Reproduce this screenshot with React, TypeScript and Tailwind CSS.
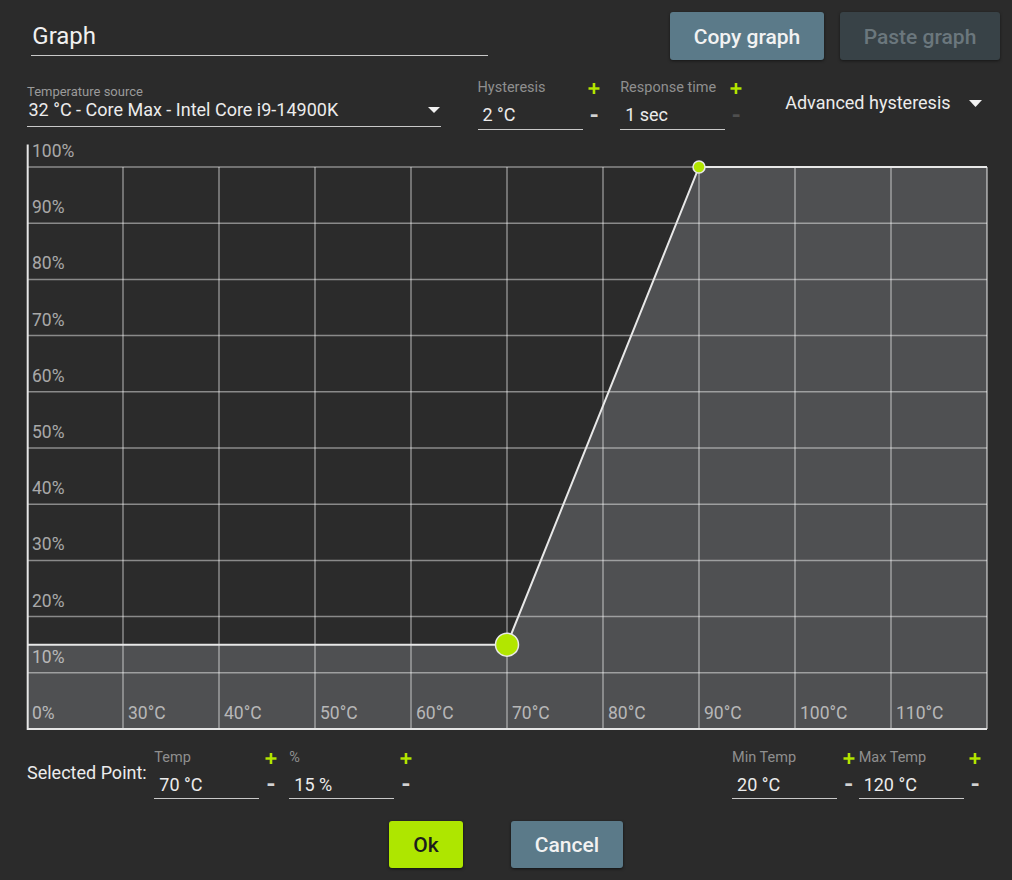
import React from "react";

const LIME = "#b2e600";

function Plus() {
  return (
    <svg width="12" height="11" viewBox="0 0 12 11">
      <path d="M6 0v11M0.5 5.5h11" stroke={LIME} strokeWidth="2.6" />
    </svg>
  );
}

function Caret({ w = 12, h = 6 }: { w?: number; h?: number }) {
  return (
    <svg width={w} height={h} viewBox={`0 0 ${w} ${h}`}>
      <path d={`M0 0H${w}L${w / 2} ${h}Z`} fill="#f2f2f2" />
    </svg>
  );
}

function Field({ label, value }: { label: string; value: string }) {
  return (
    <div className="w-[105px] shrink-0">
      <div className="h-[15px] text-[14.5px] leading-[15px] text-[#8f8f8f] whitespace-nowrap">{label}</div>
      <div className="mt-[10.2px] h-[24.8px] pl-[5px] text-[18px] leading-[20px] text-[#ececec] border-b-[1.5px] border-[#c9c9c9] whitespace-nowrap">
        {value}
      </div>
    </div>
  );
}

function Steps({ dim = false, className = "" }: { dim?: boolean; className?: string }) {
  return (
    <div className={`w-[12px] shrink-0 flex flex-col items-center ${className}`}>
      <div className="mt-[3.3px] h-[11px]">
        <Plus />
      </div>
      <div
        className={`mt-[8.6px] h-[24px] text-[24px] leading-[24px] font-bold ${dim ? "text-[#4f4f4f]" : "text-[#d2d2d2]"}`}
      >
        -
      </div>
    </div>
  );
}

function Chart() {
  const left = 27;
  const right = 987;
  const top = 167;
  const bottom = 729;
  const cw = 96;
  const rh = (bottom - top) / 10;
  const xs = Array.from({ length: 9 }, (_, i) => left + cw * (i + 1));
  const ys = Array.from({ length: 10 }, (_, i) => top + rh * i);
  const yLabels = ["100%", "90%", "80%", "70%", "60%", "50%", "40%", "30%", "20%", "10%", "0%"];
  const xLabels = ["30°C", "40°C", "50°C", "60°C", "70°C", "80°C", "90°C", "100°C", "110°C"];
  const p1 = { x: 507, y: bottom - 0.15 * (bottom - top) };
  const p2 = { x: 699, y: top };

  return (
    <svg width="1012" height="595" viewBox="0 140 1012 595" className="block shrink-0">
      {/* area under the curve */}
      <polygon
        points={`${left},${p1.y} ${p1.x},${p1.y} ${p2.x},${p2.y} ${right},${top} ${right},${bottom} ${left},${bottom}`}
        fill="#4f5052"
      />
      {/* grid */}
      {ys.map((y) => (
        <line key={`h${y}`} x1={left} x2={right} y1={y} y2={y} stroke="#ffffff" strokeOpacity="0.45" strokeWidth="1.5" />
      ))}
      {xs.map((x) => (
        <line key={`v${x}`} x1={x} x2={x} y1={top} y2={bottom} stroke="#ffffff" strokeOpacity="0.45" strokeWidth="1.5" />
      ))}
      <line x1={right} x2={right} y1={top} y2={bottom} stroke="#ffffff" strokeOpacity="0.6" strokeWidth="1.5" />

      {/* labels */}
      <g fontFamily="Roboto, sans-serif" fontSize="17.5" fill="#ffffff" fillOpacity="0.6">
        {yLabels.map((t, i) => (
          <text key={t} x={32} y={top + rh * i - 10}>
            {t}
          </text>
        ))}
        {xLabels.map((t, i) => (
          <text key={t} x={xs[i] + 5} y={bottom - 10}>
            {t}
          </text>
        ))}
      </g>

      {/* axes */}
      <line x1={left} x2={right} y1={bottom} y2={bottom} stroke="#e6e6e6" strokeWidth="2" />
      <line x1={27.7} x2={27.7} y1={144.5} y2={bottom + 1} stroke="#e6e6e6" strokeWidth="2" />

      {/* curve */}
      <polyline
        points={`${left},${p1.y} ${p1.x},${p1.y} ${p2.x},${p2.y} ${right},${top}`}
        fill="none"
        stroke="#e8e8e8"
        strokeWidth="2"
      />
      <circle cx={p1.x} cy={p1.y} r="11.5" fill={LIME} stroke="#e8e8e8" strokeWidth="1.5" />
      <circle cx={p2.x} cy={p2.y} r="6" fill={LIME} stroke="#e8e8e8" strokeWidth="1.5" />
    </svg>
  );
}

export default function App() {
  return (
    <div className="w-[1012px] h-[880px] bg-[#2b2b2b] overflow-hidden flex flex-col font-['Roboto',sans-serif] text-[#ececec]">
      {/* Header */}
      <div className="flex h-[80px] pt-[12px] shrink-0">
        <div className="ml-[30.7px] mt-[9.8px] w-[457.5px] h-[34.25px] pl-[1.6px] text-[24px] leading-[28px] text-[#f0f0f0] border-b-[1.5px] border-[#c9c9c9]">
          Graph
        </div>
        <div className="ml-auto mr-[12px] flex gap-[16px]">
          <button className="w-[154px] h-[47.5px] pt-[3px] rounded-[3px] bg-[#5b7a89] text-[21px] font-medium text-[#f2f2f2] shadow-[0_1px_3px_rgba(0,0,0,0.5)]">
            Copy graph
          </button>
          <button className="w-[160px] h-[47.5px] pt-[3px] rounded-[3px] bg-[#384247] text-[21px] font-medium text-[#6b777d] shadow-[0_1px_3px_rgba(0,0,0,0.5)]">
            Paste graph
          </button>
        </div>
      </div>

      {/* Source / hysteresis row */}
      <div className="flex items-start h-[60px] shrink-0">
        <div className="ml-[27px] w-[413.5px] shrink-0">
          <div className="mt-[3.75px] h-[15px] text-[13px] leading-[15px] text-[#9a9a9a]">Temperature source</div>
          <div className="mt-[0.8px] h-[27.3px] pl-[1.5px] pr-[1px] flex items-start justify-between border-b-[1.5px] border-[#c9c9c9]">
            <span className="text-[18px] leading-[20px] text-[#ececec] whitespace-nowrap">
              32 °C - Core Max - Intel Core i9-14900K
            </span>
            <span className="mt-[7px]">
              <Caret />
            </span>
          </div>
        </div>
        <div className="ml-[37px] flex items-start">
          <Field label="Hysteresis" value="2 °C" />
          <Steps className="ml-[5.7px]" />
          <div className="ml-[20px]">
            <Field label="Response time" value="1 sec" />
          </div>
          <Steps dim className="ml-[5px]" />
        </div>
        <div className="ml-[43px] mt-[13.2px] flex items-center gap-[18px]">
          <span className="text-[18px] leading-[20px] text-[#ececec] whitespace-nowrap">Advanced hysteresis</span>
          <Caret w={13} h={7} />
        </div>
      </div>

      {/* Graph */}
      <Chart />

      {/* Selected point / range row */}
      <div className="flex items-start h-[86px] pt-[14.5px] shrink-0">
        <div className="ml-[27px] w-[127.3px] shrink-0 mt-[13.7px] text-[18px] leading-[20px] text-[#ececec] whitespace-nowrap">
          Selected Point:
        </div>
        <Field label="Temp" value="70 °C" />
        <Steps className="ml-[5.7px]" />
        <div className="ml-[12.3px]">
          <Field label="%" value="15 %" />
        </div>
        <Steps className="ml-[5.7px]" />
        <div className="ml-auto flex items-start mr-[30.7px]">
          <Field label="Min Temp" value="20 °C" />
          <Steps className="ml-[5.6px]" />
          <div className="ml-[4px]">
            <Field label="Max Temp" value="120 °C" />
          </div>
          <Steps className="ml-[5.7px]" />
        </div>
      </div>

      {/* Dialog buttons */}
      <div className="flex justify-center gap-[48px] shrink-0">
        <button className="w-[74px] h-[47px] pt-[3px] rounded-[3px] bg-[#aee600] text-[21px] font-medium text-[#1c1c1c] shadow-[0_1px_3px_rgba(0,0,0,0.6)]">
          Ok
        </button>
        <button className="w-[112px] h-[47px] pt-[3px] rounded-[3px] bg-[#5b7a89] text-[21px] font-medium text-[#f2f2f2] shadow-[0_1px_3px_rgba(0,0,0,0.6)]">
          Cancel
        </button>
      </div>
    </div>
  );
}
